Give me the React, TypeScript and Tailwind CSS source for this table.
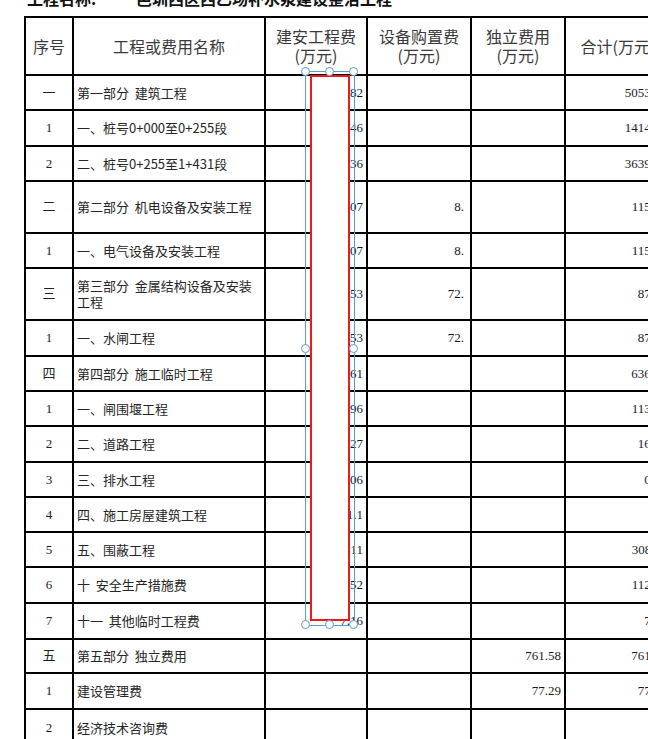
import React from "react";

type Row = {
  no: string;
  name: string;
  ja?: string;
  sb?: string;
  dl?: string;
  hj?: string;
  h: string;
};

const rows: Row[] = [
  { no: "一", name: "第一部分  建筑工程", ja: "5053.82", hj: "5053.82", h: "h-[35px]" },
  { no: "1", name: "一、桩号0+000至0+255段", ja: "1414.46", hj: "1414.46", h: "h-[36px]" },
  { no: "2", name: "二、桩号0+255至1+431段", ja: "3639.36", hj: "3639.36", h: "h-[35px]" },
  { no: "二", name: "第二部分  机电设备及安装工程", ja: "107.07", sb: "8.", hj: "115.07", h: "h-[52px]" },
  { no: "1", name: "一、电气设备及安装工程", ja: "107.07", sb: "8.", hj: "115.07", h: "h-[35px]" },
  { no: "三", name: "第三部分  金属结构设备及安装\n工程", ja: "15.53", sb: "72.", hj: "87.53", h: "h-[52px]" },
  { no: "1", name: "一、水闸工程", ja: "15.53", sb: "72.", hj: "87.53", h: "h-[36px]" },
  { no: "四", name: "第四部分  施工临时工程", ja: "636.61", hj: "636.61", h: "h-[35px]" },
  { no: "1", name: "一、闸围堰工程", ja: "113.96", hj: "113.96", h: "h-[35px]" },
  { no: "2", name: "二、道路工程", ja: "16.27", hj: "16.27", h: "h-[36px]" },
  { no: "3", name: "三、排水工程", ja: "0.06", hj: "0.06", h: "h-[35px]" },
  { no: "4", name: "四、施工房屋建筑工程", ja: "1.1", hj: "1.1", h: "h-[35px]" },
  { no: "5", name: "五、围蔽工程", ja: "308.11", hj: "308.11", h: "h-[35px]" },
  { no: "6", name: "十  安全生产措施费", ja: "112.52", hj: "112.52", h: "h-[36px]" },
  { no: "7", name: "十一  其他临时工程费", ja: "7.16", hj: "7.16", h: "h-[36px]" },
  { no: "五", name: "第五部分  独立费用", dl: "761.58", hj: "761.58", h: "h-[34px]" },
  { no: "1", name: "建设管理费", dl: "77.29", hj: "77.29", h: "h-[36px]" },
  { no: "2", name: "经济技术咨询费", h: "h-[38px]" },
];

const cjk = "font-['Noto_Sans_CJK_SC',sans-serif]";
const serif = "font-['Liberation_Serif','Noto_Sans_CJK_SC',serif]";
const cell = "border-r-2 border-b-2 border-black flex items-center min-w-0 overflow-hidden";

function Header() {
  const h = `${cell} h-[58px] justify-center text-center text-[16px] leading-[19px] text-[#3a3a3a] ${cjk}`;
  return (
    <>
      <div className={h}>序号</div>
      <div className={h}>工程或费用名称</div>
      <div className={`${h} flex-col`}>
        <span>建安工程费</span>
        <span>(万元)</span>
      </div>
      <div className={`${h} flex-col`}>
        <span>设备购置费</span>
        <span>(万元)</span>
      </div>
      <div className={`${h} flex-col`}>
        <span>独立费用</span>
        <span>(万元)</span>
      </div>
      <div className={`${h} whitespace-nowrap`}>合计(万元)</div>
    </>
  );
}

function Handle({ x, y }: { x: string; y: string }) {
  return (
    <div
      className={`absolute ${x} ${y} w-[9px] h-[9px] rounded-full bg-white border border-[#5b9bd5]`}
    />
  );
}

export default function App() {
  return (
    <div className="relative w-[648px] h-[739px] overflow-hidden bg-white">
      <div className={`flex pl-[27px] -mt-[10px] h-[16px] leading-[16px] text-[16px] font-bold text-[#111] whitespace-nowrap ${cjk}`}>
        <span className="w-[109px]">工程名称:</span>
        <span>邑圳西区西乙场补水泵建设整治工程</span>
      </div>

      <div className="ml-[24px] mt-[10px] w-[648px] grid grid-cols-[48px_192px_102px_104px_94px_106px] border-l-2 border-t-2 border-black">
        <Header />
        {rows.map((r, i) => (
          <React.Fragment key={i}>
            <div className={`${cell} ${r.h} justify-center text-[13px] text-[#222] ${serif}`}>{r.no}</div>
            <div className={`${cell} ${r.h} pl-[3px] text-[13px] leading-[16px] text-[#262626] whitespace-pre ${cjk}`}>
              {r.name}
            </div>
            <div className={`${cell} ${r.h} justify-end pr-[3px] text-[13px] text-[#1a1a1a] ${serif}`}>{r.ja ?? ""}</div>
            <div className={`${cell} ${r.h} justify-end pr-[6px] text-[13px] text-[#1a1a1a] ${serif}`}>{r.sb ?? ""}</div>
            <div className={`${cell} ${r.h} justify-end pr-[3px] text-[13px] text-[#1a1a1a] ${serif}`}>{r.dl ?? ""}</div>
            <div className={`${cell} ${r.h} justify-end pr-[3px] text-[13px] text-[#1a1a1a] ${serif}`}>{r.hj ?? ""}</div>
          </React.Fragment>
        ))}
      </div>

      {/* selected shape overlay */}
      <div className="absolute left-[310px] top-[75px] w-[40px] h-[546px] bg-white border-2 border-[#f01818]" />
      <div className="absolute left-[305px] top-[71px] w-[50px] h-[555px] border border-[#5b9bd5]" />
      <Handle x="left-[301px]" y="top-[67px]" />
      <Handle x="left-[325px]" y="top-[67px]" />
      <Handle x="left-[349px]" y="top-[67px]" />
      <Handle x="left-[301px]" y="top-[344px]" />
      <Handle x="left-[349px]" y="top-[344px]" />
      <Handle x="left-[301px]" y="top-[620px]" />
      <Handle x="left-[325px]" y="top-[620px]" />
      <Handle x="left-[349px]" y="top-[620px]" />
    </div>
  );
}
